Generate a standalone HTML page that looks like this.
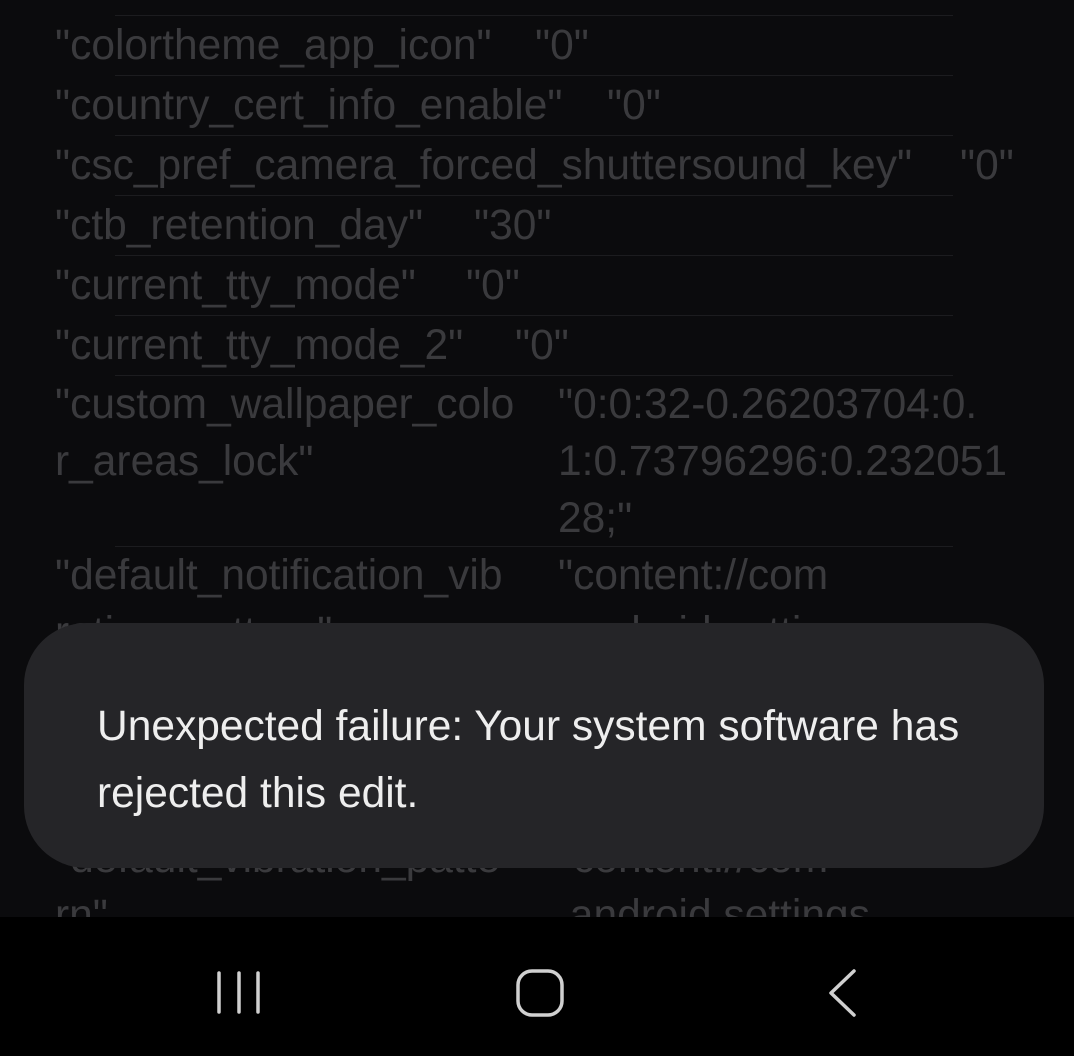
<!DOCTYPE html>
<html><head><meta charset="utf-8"><style>
html,body{margin:0;padding:0;width:1074px;height:1056px;overflow:hidden;background:#0b0b0d;font-family:"Liberation Sans",sans-serif;}
.t{position:absolute;color:#3a3a3d;font-size:42.5px;line-height:60px;white-space:nowrap;letter-spacing:0}
.s{position:absolute;left:115px;width:838px;height:1px;background:#1c1c1f}
.toast{position:absolute;left:24px;top:623px;width:1020px;height:245px;border-radius:62px;background:#252528;}
.tt{position:absolute;left:73px;top:70px;color:#eeeeee;font-size:42.5px;line-height:67px;white-space:nowrap}
.nav{position:absolute;left:0;top:917px;width:1074px;height:139px;background:#000}
</style></head><body>
<div class="s" style="top:15px"></div>
<div class="s" style="top:75px"></div>
<div class="s" style="top:135px"></div>
<div class="s" style="top:195px"></div>
<div class="s" style="top:255px"></div>
<div class="s" style="top:315px"></div>
<div class="s" style="top:375px"></div>
<div class="s" style="top:546px"></div>
<div class="t" style="left:55px;top:16px">"colortheme_app_icon"</div><div class="t" style="left:535px;top:16px">"0"</div>
<div class="t" style="left:55px;top:76px">"country_cert_info_enable"</div><div class="t" style="left:607px;top:76px">"0"</div>
<div class="t" style="left:55px;top:136px">"csc_pref_camera_forced_shuttersound_key"</div><div class="t" style="left:960px;top:136px">"0"</div>
<div class="t" style="left:55px;top:196px">"ctb_retention_day"</div><div class="t" style="left:474px;top:196px">"30"</div>
<div class="t" style="left:55px;top:256px">"current_tty_mode"</div><div class="t" style="left:466px;top:256px">"0"</div>
<div class="t" style="left:55px;top:316px">"current_tty_mode_2"</div><div class="t" style="left:515px;top:316px">"0"</div>
<div class="t" style="left:55px;top:376px;line-height:57px">"custom_wallpaper_colo<br>r_areas_lock"</div>
<div class="t" style="left:558px;top:376px;line-height:57px">"0:0:32-0.26203704:0.<br>1:0.73796296:0.232051<br>28;"</div>
<div class="t" style="left:55px;top:547px;line-height:57px">"default_notification_vib<br>ration_pattern"</div>
<div class="t" style="left:558px;top:547px;line-height:57px">"content://com<br>.android.settings</div>
<div class="t" style="left:55px;top:830px;line-height:57px">"default_vibration_patte<br>rn"</div>
<div class="t" style="left:558px;top:830px;line-height:57px">"content://com<br>.android.settings</div>
<div class="toast"><div class="tt">Unexpected failure: Your system software has<br>rejected this edit.</div></div>
<div class="nav">
<svg width="1074" height="139" style="position:absolute;left:0;top:0">
<g stroke="#d0d0d0" stroke-width="3.5" fill="none" stroke-linecap="round" stroke-linejoin="round">
<line x1="219" y1="56" x2="219" y2="95"/><line x1="239" y1="56" x2="239" y2="95"/><line x1="258" y1="56" x2="258" y2="95"/>
<rect x="518" y="54" width="44" height="44" rx="14"/>
<polyline points="854,54 831,76 854,98"/>
</g></svg>
</div>
</body></html>
